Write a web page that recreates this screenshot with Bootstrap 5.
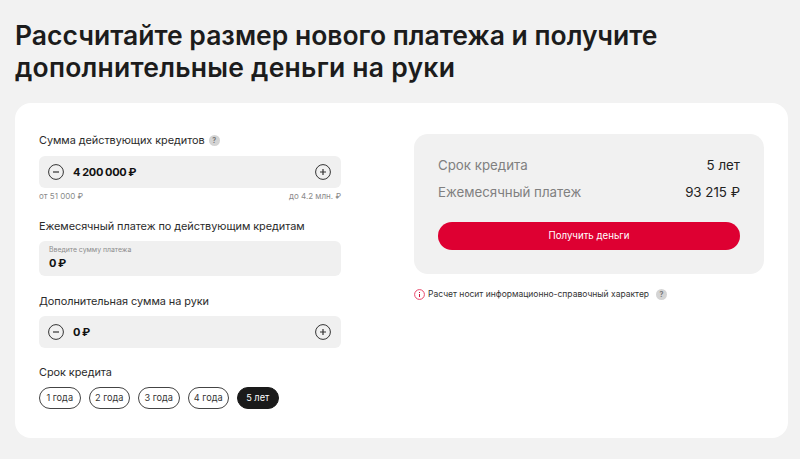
<!doctype html>
<html lang="ru"><head><meta charset="utf-8">
<link rel="stylesheet" href="https://cdn.jsdelivr.net/npm/bootstrap@5.3.0/dist/css/bootstrap.min.css">
<style>
html,body{height:459px;overflow:hidden}
body{background:#f2f2f2;font-family:"Inter","Noto Sans",sans-serif;color:#1a1a1a;padding:19px 12px 0 15px}
.hero-title{font-size:26.5px;line-height:32px;font-weight:600;margin:0 0 20px;color:#1c1c1c}
.hero-second{letter-spacing:.24px}
.calc-shell{background:#fff;border-radius:16px;height:335px;padding:30px 24px 0}
.form-side{width:302px}
.gap-side{width:73px}
.info-side{width:350px;padding-top:1px}
.field-label{font-size:10.9px;line-height:14px;color:#2b2b2b;margin:0;letter-spacing:-.05px}
.label-gap{margin-top:18px}
.label-gap-sm{margin-top:17px}
.help-dot{width:11px;height:11px;border-radius:50%;background:#d4d4d4;color:#777;font-size:7px;line-height:11px;text-align:center;font-weight:700}
.field-box{background:#f0f0f0;border-radius:6px;height:32px;padding:0 10px 0 9px;margin-top:9px}
.field-box.box-tight{margin-top:8px}
.round-icon{display:block;flex:none}
.field-value{font-size:11px;font-weight:700;color:#111;margin-left:9px;letter-spacing:-.3px;word-spacing:-.3px}
.range-note{font-size:8px;line-height:10px;color:#8a8a8a;margin-top:3px}
.entry-box{background:#f0f0f0;border-radius:6px;height:35px;padding:5px 10px;margin-top:8px}
.entry-hint{font-size:6.9px;line-height:8px;color:#8d8d8d}
.entry-value{font-size:11px;font-weight:700;line-height:14px;margin-top:2px;color:#111;letter-spacing:-.3px;word-spacing:-.3px}
.term-pill{font-size:9.2px;line-height:20px;height:22px;width:41.5px;padding:0;border:1px solid #444;border-radius:11px;background:#fff;color:#333}
.term-pill.is-on{background:#1a1a1a;border-color:#1a1a1a;color:#fff}
.term-row{gap:8px}
.result-panel{background:#f1f1f1;border-radius:14px;height:140px;padding:22px 24px 0}
.result-key{font-size:13.3px;line-height:18px;color:#808080}
.result-val{font-size:13.3px;line-height:18px;color:#222}
.second-row{margin-top:9px}
.get-btn{background:#de0032;border:0;border-radius:14px;height:28px;width:100%;color:#fff;font-size:9.7px;font-weight:400;padding:0;margin-top:21px}
.disclaim{font-size:8.5px;line-height:11px;color:#333;margin-top:15px;gap:3px}
.disclaim .help-dot{margin-left:4px}
</style></head><body>
<h1 class="hero-title">Рассчитайте размер нового платежа и получите<br><span class="hero-second">дополнительные деньги на руки</span></h1>
<main class="calc-shell d-flex">
<section class="form-side">
<div class="d-flex align-items-center gap-1"><p class="field-label">Сумма действующих кредитов</p><span class="help-dot">?</span></div>
<div class="field-box d-flex align-items-center">
<svg class="round-icon" width="16" height="16" viewBox="0 0 16 16" fill="none" stroke="#333"><circle cx="8" cy="8" r="7.4"/><path d="M5 8h6" stroke-width="1.2"/></svg>
<span class="field-value">4 200 000 ₽</span>
<svg class="round-icon ms-auto" width="16" height="16" viewBox="0 0 16 16" fill="none" stroke="#333"><circle cx="8" cy="8" r="7.4"/><path d="M5 8h6M8 5v6" stroke-width="1.2"/></svg>
</div>
<div class="range-note d-flex justify-content-between"><span>от 51 000 ₽</span><span>до 4.2 млн. ₽</span></div>
<p class="field-label label-gap">Ежемесячный платеж по действующим кредитам</p>
<div class="entry-box"><div class="entry-hint">Введите сумму платежа</div><div class="entry-value">0 ₽</div></div>
<p class="field-label label-gap">Дополнительная сумма на руки</p>
<div class="field-box box-tight d-flex align-items-center">
<svg class="round-icon" width="16" height="16" viewBox="0 0 16 16" fill="none" stroke="#333"><circle cx="8" cy="8" r="7.4"/><path d="M5 8h6" stroke-width="1.2"/></svg>
<span class="field-value">0 ₽</span>
<svg class="round-icon ms-auto" width="16" height="16" viewBox="0 0 16 16" fill="none" stroke="#333"><circle cx="8" cy="8" r="7.4"/><path d="M5 8h6M8 5v6" stroke-width="1.2"/></svg>
</div>
<p class="field-label label-gap-sm">Срок кредита</p>
<div class="d-flex mt-2 term-row">
<button class="btn term-pill">1 года</button><button class="btn term-pill">2 года</button><button class="btn term-pill">3 года</button><button class="btn term-pill">4 года</button><button class="btn term-pill is-on">5 лет</button>
</div>
</section>
<div class="gap-side"></div>
<aside class="info-side">
<div class="result-panel">
<div class="d-flex justify-content-between"><span class="result-key">Срок кредита</span><span class="result-val">5 лет</span></div>
<div class="d-flex justify-content-between second-row"><span class="result-key">Ежемесячный платеж</span><span class="result-val">93 215 ₽</span></div>
<button class="btn get-btn">Получить деньги</button>
</div>
<div class="disclaim d-flex align-items-center">
<svg class="round-icon" width="11" height="11" viewBox="0 0 11 11" fill="none" stroke="#e8486b"><circle cx="5.5" cy="5.5" r="4.9"/><path d="M5.5 5v3M5.5 3v1" stroke="#d0103a"/></svg>
<span>Расчет носит информационно-справочный характер</span><span class="help-dot">?</span></div>
</aside>
</main>
</body></html>
